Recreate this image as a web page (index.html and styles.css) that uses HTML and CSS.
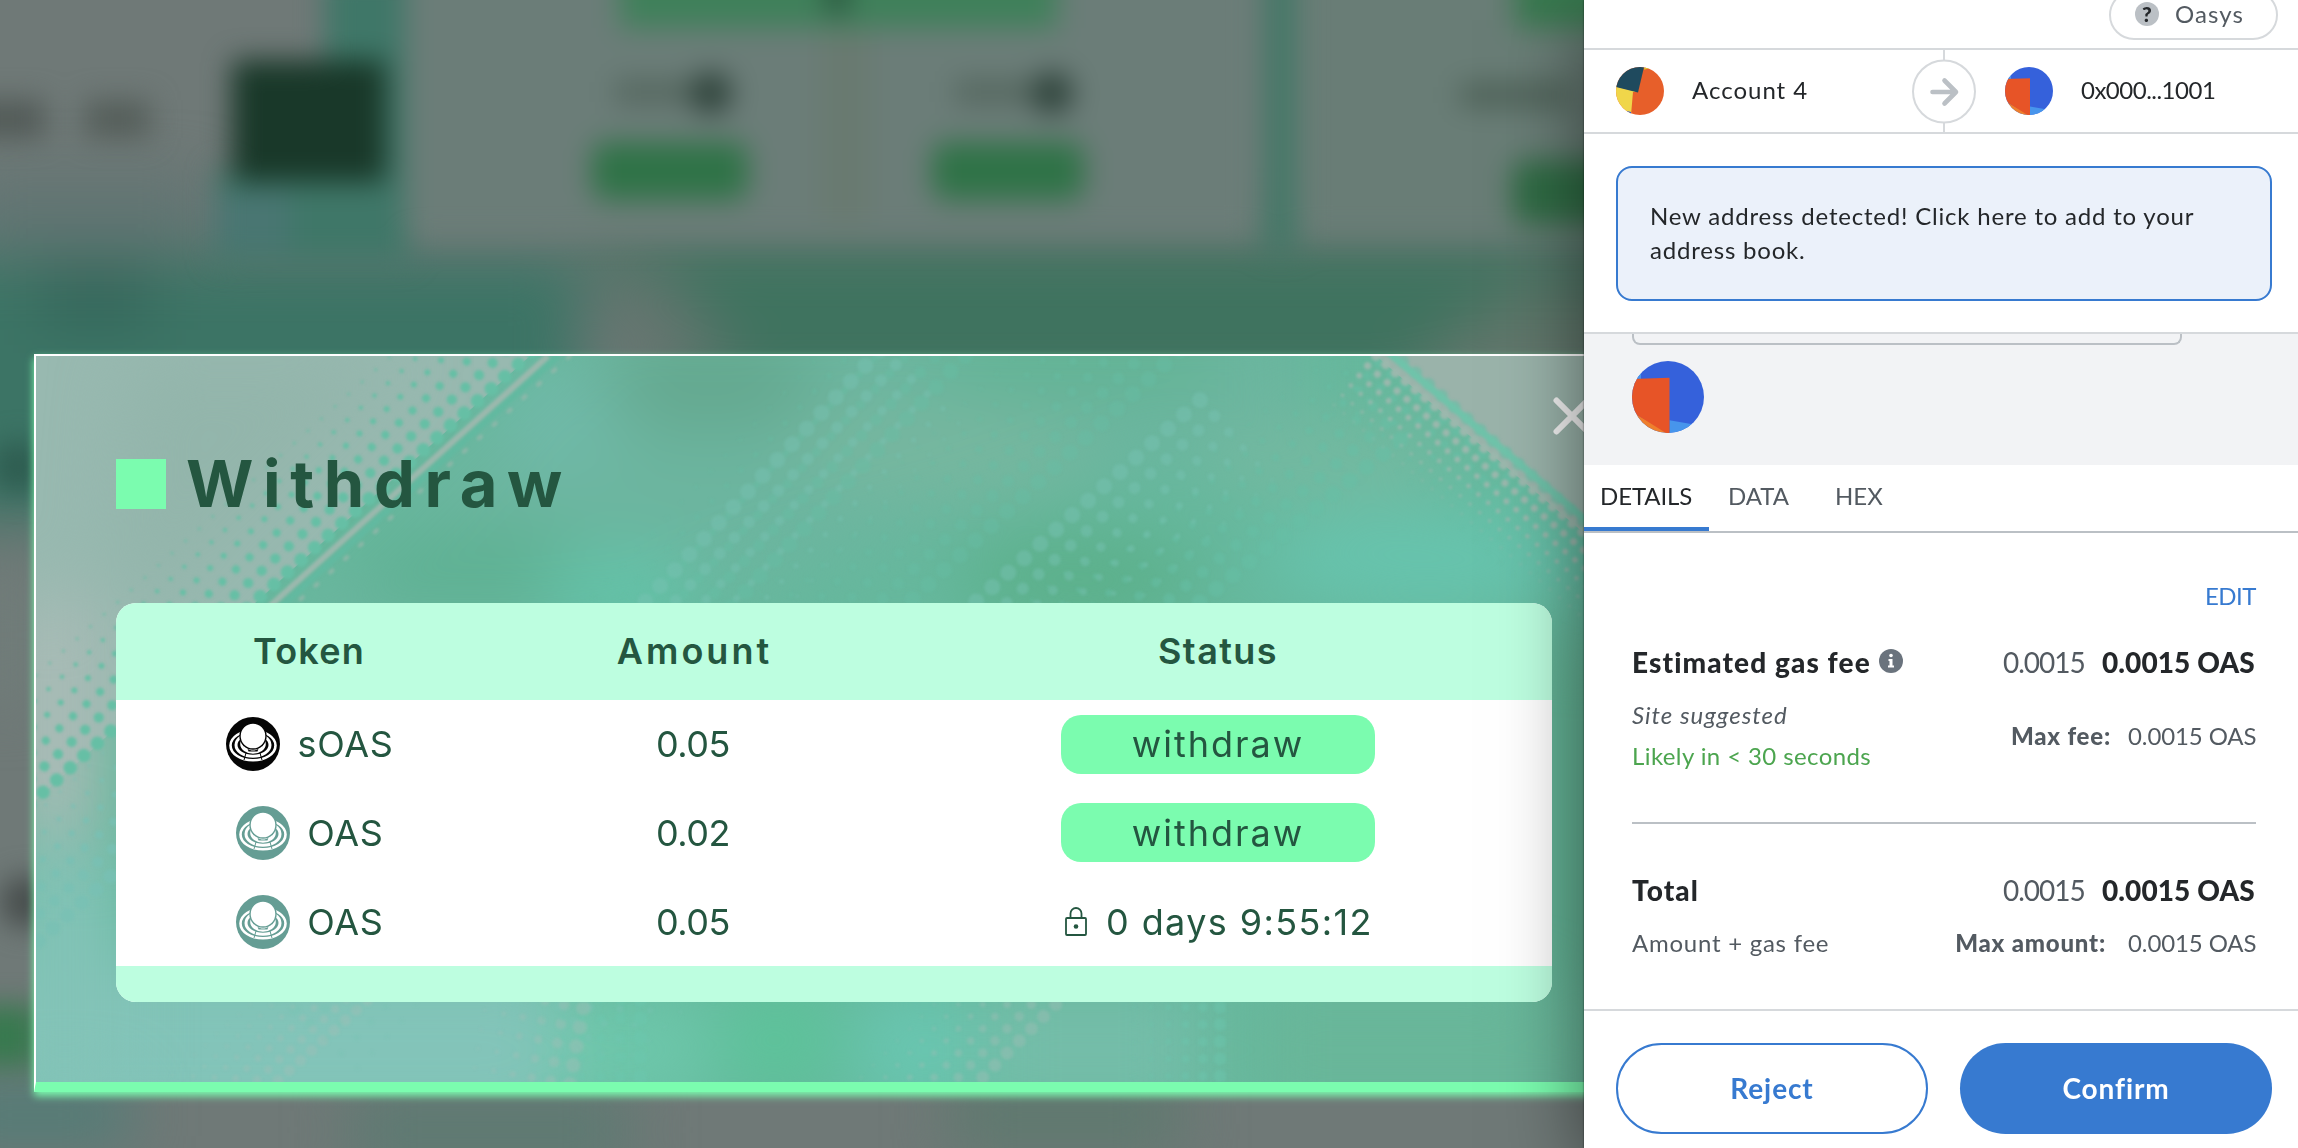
FILE: index.html
```
<!DOCTYPE html>
<html lang="en">
<head>
<meta charset="utf-8">
<title>Withdraw</title>
<link rel="stylesheet" href="styles.css">
</head>
<body>
<main class="app">
  <svg class="backdrop" viewBox="0 0 1584 1148" aria-hidden="true">
    <defs>
      <filter id="soft" x="-20%" y="-20%" width="140%" height="140%" color-interpolation-filters="sRGB"><feGaussianBlur stdDeviation="14"/></filter>
      <filter id="wide" x="-50%" y="-50%" width="200%" height="200%" color-interpolation-filters="sRGB"><feGaussianBlur stdDeviation="30"/></filter>
    </defs>
    <rect width="1584" height="1148" fill="#6f7977"/>
    <g filter="url(#wide)">
      <rect x="-80" y="255" width="660" height="265" fill="#3c7465"/>
      <rect x="40" y="265" width="110" height="60" fill="#34665a"/>
      <path d="M580 240h1090v60l-260 100H680z" fill="#3f735f"/>
      <path d="M580 270h80l90 100H620z" fill="#64756f"/>
      <path d="M1520 280l130 0v100h-260z" fill="#5f766a"/>
      <rect x="-40" y="180" width="250" height="60" fill="#5f7472"/>
      <rect x="-60" y="570" width="110" height="130" fill="#707c79"/>
      <rect x="-60" y="1090" width="190" height="50" fill="#4b7d76"/>
      <rect x="350" y="1090" width="280" height="80" fill="#5d7a72"/>
      <rect x="950" y="1080" width="230" height="70" fill="#5d796e"/>
    </g>
    <g filter="url(#soft)">
      <path d="M325-30h85v290H215V170h110z" fill="#3f7768"/>
      <rect x="215" y="190" width="75" height="60" fill="#497672"/>
      <rect x="405" y="-40" width="852" height="278" fill="#6b7d78"/>
      <rect x="820" y="30" width="50" height="190" fill="#697a70"/>
      <rect x="1300" y="-40" width="340" height="278" fill="#697d76"/>
      <rect x="1264" y="-40" width="32" height="290" fill="#437867"/>
      <rect x="620" y="-40" width="437" height="68" fill="#3f805a"/>
      <rect x="827" y="-30" width="20" height="44" fill="#28523c"/>
      <rect x="232" y="60" width="154" height="122" rx="6" fill="#193829"/>
      <rect x="592" y="142" width="156" height="58" rx="14" fill="#2f7347"/>
      <rect x="932" y="142" width="152" height="58" rx="14" fill="#2f7347"/>
      <rect x="1515" y="-40" width="120" height="68" fill="#38794f"/>
      <rect x="1512" y="160" width="120" height="64" rx="14" fill="#2f6b44"/>
      <rect x="615" y="80" width="75" height="24" fill="#55675f"/>
      <rect x="955" y="80" width="75" height="24" fill="#55675f"/>
      <circle cx="711" cy="93" r="21" fill="#2e423a"/>
      <circle cx="1052" cy="93" r="21" fill="#2e423a"/>
      <rect x="1460" y="84" width="110" height="22" fill="#4d6056"/>
      <rect x="-30" y="100" width="75" height="38" fill="#525a57"/>
      <rect x="85" y="100" width="65" height="38" fill="#555e5a"/>
      <circle cx="18" cy="467" r="26" fill="#2e5c50"/>
      <circle cx="26" cy="902" r="26" fill="#474d4c"/>
      <rect x="-30" y="1005" width="70" height="62" fill="#38794f"/>
    </g>
  </svg>

  <section class="modal">
    <svg class="artwork" viewBox="36 356 1548 726" preserveAspectRatio="xMinYMin slice" aria-hidden="true">
      <defs>
        <filter id="haze" x="-50%" y="-50%" width="200%" height="200%" color-interpolation-filters="sRGB"><feGaussianBlur stdDeviation="34"/></filter>
        <filter id="dots" x="0" y="0" width="100%" height="100%" color-interpolation-filters="sRGB"><feGaussianBlur stdDeviation="1.800"/></filter>
        <g id="halftone" fill="none" stroke-linecap="round" stroke-dasharray="0 21.5">
          <path d="M0 0H900" stroke-width="16"/>
          <path d="M0 21.5H900" stroke-width="12"/>
          <path d="M0 43H900" stroke-width="9.500"/>
          <path d="M0 64.500H900" stroke-width="7"/>
          <path d="M0 86H900" stroke-width="5"/>
          <path d="M0 107.500H900" stroke-width="3"/>
        </g>
      </defs>
      <rect x="36" y="356" width="1548" height="726" fill="#66b89d"/>
      <g filter="url(#haze)">
        <path d="M600 300h700v120L560 640H260z" fill="#6cb59f"/>
        <ellipse cx="710" cy="380" rx="110" ry="50" fill="#64a88f"/>
        <ellipse cx="560" cy="420" rx="60" ry="60" fill="#70b9a8"/>
        <ellipse cx="480" cy="570" rx="130" ry="40" fill="#5db192"/>
        <ellipse cx="620" cy="590" rx="80" ry="40" fill="#63c3a9"/>
        <ellipse cx="940" cy="450" rx="150" ry="40" fill="#78b79f"/>
        <ellipse cx="1080" cy="360" rx="150" ry="36" fill="#62b394"/>
        <ellipse cx="1080" cy="580" rx="120" ry="50" fill="#5cb08b"/>
        <ellipse cx="1330" cy="460" rx="130" ry="36" fill="#76b9a1"/>
        <ellipse cx="1430" cy="560" rx="170" ry="50" fill="#67c4ae"/>
        <rect x="1540" y="640" width="90" height="360" fill="#62b092"/>
        <rect x="0" y="960" width="560" height="180" fill="#83c4b9"/>
        <rect x="560" y="990" width="150" height="120" fill="#6dc6aa"/>
        <ellipse cx="780" cy="1040" rx="60" ry="60" fill="#5dc39a"/>
        <rect x="860" y="990" width="110" height="120" fill="#69c6b1"/>
        <rect x="980" y="990" width="220" height="120" fill="#75bda9"/>
        <rect x="1250" y="990" width="380" height="120" fill="#69b699"/>
      </g>
      <path d="M36 356H530L36 800z" fill="#98b9b0"/>
      <g filter="url(#haze)">
        <path d="M130 356h280L160 603H110z" fill="#93b5ab"/>
        <rect x="10" y="600" width="90" height="240" fill="#a9bbb6"/>
        <path d="M10 850h110v240H10z" fill="#83c3b7"/>
      </g>
      <path d="M1376 356h208v177z" fill="#9ab3aa"/>

      <g filter="url(#dots)">
        <g stroke="#66bfa5">
          <use href="#halftone" transform="translate(532 352) rotate(138) scale(.85)"/>
          <use href="#halftone" transform="translate(980 340) rotate(133)" opacity=".35"/>
          <use href="#halftone" transform="translate(1180 350) rotate(137)" opacity=".4"/>
          <use href="#halftone" transform="translate(1400 440) rotate(141)" opacity=".5"/>
          <use href="#halftone" transform="translate(1390 350) rotate(-138.500) scale(-.8)" opacity=".6"/>
        </g>
        <g stroke="#79c4b3" opacity=".45">
          <use href="#halftone" transform="translate(880 350) rotate(-47) scale(-1 1)"/>
          <use href="#halftone" transform="translate(1200 400) rotate(-42) scale(-1 1)"/>
        </g>
        <g stroke="#9bb8ad" fill="none">
          <path d="M548 356L270 606" stroke-width="6"/>
          <path d="M570 356L293 606" stroke-width="4" stroke-dasharray="3 17" stroke-linecap="round" opacity=".7"/>
          <use href="#halftone" transform="translate(1376 356) rotate(40.500) scale(.6)"/>
        </g>
        <path d="M1388 352l200 170" stroke="#6fc3aa" stroke-width="7"/>
        <path d="M558 356L282 606" stroke="#62b9a0" stroke-width="6"/>
        <g stroke="#78c1b4" opacity=".75">
          <use href="#halftone" transform="translate(240 760) rotate(138) scale(.9)"/>
        </g>
        <g stroke="#a3bfb6" opacity=".4">
          <use href="#halftone" transform="translate(590 970) rotate(100) scale(.9)"/>
          <use href="#halftone" transform="translate(390 980) rotate(138) scale(.7)"/>
          <use href="#halftone" transform="translate(1080 980) rotate(135) scale(.8)"/>
        </g>
        <g stroke="#6bc7ae" opacity=".45">
          <use href="#halftone" transform="translate(640 980) rotate(90) scale(.9)"/>
          <use href="#halftone" transform="translate(1220 990) rotate(90) scale(.8)"/>
        </g>
      </g>
    </svg>

    <header class="modal-head">
      <span class="marker"></span>
      <h1 class="modal-title">Withdraw</h1>
    </header>

    <div class="table">
      <div class="row head">
        <span class="th-token">Token</span><span class="th-amount">Amount</span><span class="th-status">Status</span>
      </div>
      <div class="row">
        <span class="token">
          <svg class="coin ink" viewBox="0 0 54 54"><use href="#coin"/></svg><span>sOAS</span>
        </span>
        <span class="amount">0.05</span>
        <span><button class="withdraw">withdraw</button></span>
      </div>
      <div class="row">
        <span class="token">
          <svg class="coin teal" viewBox="0 0 54 54"><use href="#coin"/></svg><span>OAS</span>
        </span>
        <span class="amount">0.02</span>
        <span><button class="withdraw">withdraw</button></span>
      </div>
      <div class="row">
        <span class="token">
          <svg class="coin teal" viewBox="0 0 54 54"><use href="#coin"/></svg><span>OAS</span>
        </span>
        <span class="amount">0.05</span>
        <span class="timer">
          <svg class="lock" viewBox="0 0 22 29" fill="none" stroke="#245640" stroke-width="1.800"><rect x="1" y="11" width="20" height="17" rx="1"/><path d="M5.500 11V6.500a5.500 5.500 0 0 1 11 0V11"/><circle cx="11" cy="19.500" r="2.300" fill="#245640" stroke="none"/></svg>
          <span>0 days 9:55:12</span>
        </span>
      </div>
      <div class="foot"></div>
    </div>

    <svg class="close" viewBox="0 0 38 38" stroke="#f4f4f4" stroke-width="6" stroke-linecap="round"><path d="M3.500 3.500l31 31M34.500 3.500l-31 31"/></svg>
  </section>
</main>

<aside class="panel">
  <div class="topbar">
    <div class="network">
      <span class="help">?</span>
      <span>Oasys</span>
    </div>
  </div>

  <div class="parties">
    <div class="party from">
      <svg class="avatar" viewBox="0 0 48 48"><g clip-path="url(#disc)"><rect width="48" height="48" fill="#e75f2a"/><path d="M-4 18.500L22 25 17 25 14 60-4 60z" fill="#f0d64a"/><path d="M-4 19L22 25.500 28.500-2H-4z" fill="#1f4a5e"/><path d="M28.500 0h9L28 2.800z" fill="#e0c62e"/><path d="M11 44l4 1v3h-5z" fill="#2f5be0"/></g></svg>
      <span class="from-name">Account 4</span>
    </div>
    <div class="transfer">
      <svg viewBox="0 0 64 82" fill="none"><path d="M32 0v82" stroke="#d6d9dc" stroke-width="2"/><circle cx="32" cy="41.500" r="31" fill="#fff" stroke="#d6d9dc" stroke-width="2"/><path d="M20.500 42H43M32.500 30.500L44 42 32.500 53.500" stroke="#bbc0c5" stroke-width="4.600" stroke-linecap="round" stroke-linejoin="round"/></svg>
    </div>
    <div class="party">
      <svg class="avatar" viewBox="0 0 48 48"><use href="#contract"/></svg>
      <span class="to-name">0x000...1001</span>
    </div>
  </div>

  <div class="notice-wrap">
    <div class="notice">New address detected! Click here to add to your address book.</div>
  </div>

  <div class="origin">
    <div class="select-edge"></div>
    <svg class="avatar-lg" viewBox="0 0 48 48"><use href="#contract"/></svg>
  </div>

  <nav class="tabs">
    <span class="tab active">DETAILS</span><span class="tab data">DATA</span><span class="tab hex">HEX</span>
  </nav>

  <div class="fees">
    <div class="edit">EDIT</div>
    <div class="line main">
      <span class="label"><span class="gas">Estimated gas fee</span>
        <svg class="info" viewBox="0 0 24 24"><circle cx="12" cy="12" r="12" fill="#6a737d"/><circle cx="12" cy="6.500" r="1.800" fill="#fff"/><path d="M9.500 10h4v6.500h1.500v2h-6v-2h1.500V12h-1z" fill="#fff"/></svg>
      </span>
      <span class="values"><span class="plain">0.0015</span><b class="total">0.0015 OAS</b></span>
    </div>
    <div class="line sub">
      <div class="notes"><i>Site suggested</i><span class="likely">Likely in &lt; 30 seconds</span></div>
      <span class="max"><b>Max fee:</b><span class="coinage">0.0015 OAS</span></span>
    </div>
    <hr class="rule">
    <div class="line main">
      <span class="label">Total</span>
      <span class="values"><span class="plain">0.0015</span><b class="total">0.0015 OAS</b></span>
    </div>
    <div class="line amount-line">
      <span class="amount-label">Amount + gas fee</span>
      <span class="max wide"><b>Max amount:</b><span class="coinage">0.0015 OAS</span></span>
    </div>
  </div>

  <footer class="actions">
    <button class="btn reject">Reject</button>
    <button class="btn confirm">Confirm</button>
  </footer>
</aside>

<svg class="sprites" aria-hidden="true">
  <defs>
    <clipPath id="disc"><circle cx="24" cy="24" r="24"/></clipPath>
    <symbol id="contract" viewBox="0 0 48 48">
      <g clip-path="url(#disc)">
        <rect width="48" height="48" fill="#3561db"/>
        <path d="M0 0h6v12H0z" fill="#4795ec"/>
        <path d="M25 39.500l23 4V48H25z" fill="#4795ec"/>
        <path d="M0 34l25 14H0z" fill="#ee7f2d"/>
        <path d="M-2 12l27-.8V49.500L-2 32.500z" fill="#e75427"/>
      </g>
    </symbol>
    <symbol id="coin" viewBox="0 0 54 54">
      <circle cx="27" cy="27" r="27" fill="currentColor"/>
      <g fill="none" stroke="#fff">
        <ellipse cx="27" cy="28.500" rx="22.500" ry="14.800" stroke-width="2.600"/>
        <ellipse cx="27" cy="28" rx="17" ry="11.300" stroke-width="3"/>
        <ellipse cx="27" cy="27" rx="11.500" ry="8.500" stroke-width="2.600"/>
      </g>
      <path d="M17 29c1.500 5 5 6.500 10 6.500S35.500 34 37 29l-4-2H21z" fill="#fff"/>
      <path d="M21.500 31.500c3 2.800 8 2.800 11 0l-1 3h-9z" fill="currentColor"/>
      <path d="M20 36l-2 7M34 36l2 7" stroke="currentColor"/>
      <circle cx="27" cy="19" r="13" fill="#fff" stroke="currentColor" stroke-width="1.400"/>
    </symbol>
  </defs>
</svg>
</body>
</html>
```

FILE: styles.css
```
* { box-sizing: border-box; }
body {
  margin: 0;
  width: 2298px;
  height: 1148px;
  display: flex;
  overflow: hidden;
  background: #fff;
  font-family: Lato, "Liberation Sans", sans-serif;
}
button { font: inherit; color: inherit; letter-spacing: inherit; border: 0; padding: 0; margin: 0; }
.sprites { position: absolute; width: 0; height: 0; }

/* dimmed application and modal window */
.app {
  position: relative;
  width: 1584px;
  height: 1148px;
  overflow: hidden;
  flex: none;
}
.backdrop { position: absolute; inset: 0; width: 1584px; height: 1148px; }
.modal {
  position: absolute;
  left: 34px;
  top: 354px;
  width: 1600px;
  height: 738px;
  padding: 103px 0 0 80px;
  border: 2px solid #fff;
  border-bottom: 10px solid #7bfcaf;
  box-shadow: 0 4px 8px #7bfcaf;
  font-family: Inter, "Liberation Sans", sans-serif;
  color: #245640;
}
.artwork { position: absolute; left: 0; top: 0; width: 1548px; height: 726px; }
.modal-head { position: relative; display: flex; align-items: center; gap: 20px; height: 50px; }
.marker { width: 50px; height: 50px; background: #7bfcaf; }
.modal-title { margin: 0; font-size: 65px; line-height: 64px; font-weight: 700; letter-spacing: 9.6px; }

.table {
  position: relative;
  width: 1436px;
  margin-top: 94px;
  border-radius: 20px;
  overflow: hidden;
  background: #fff;
  font-size: 36px;
  line-height: 44px;
}
.row { display: grid; grid-template-columns: 386px 382px 668px; height: 88.67px; align-items: center; text-align: center; }
.head { height: 97px; padding-bottom: 2px; background: #bdfee0; font-weight: 600; }
.th-token { letter-spacing: 1.2px; }
.th-amount { padding-left: 3px; letter-spacing: 3px; }
.th-status { letter-spacing: 1.4px; }
.token { display: flex; align-items: center; justify-content: center; gap: 17px; padding-left: 2px; letter-spacing: .7px; }
.coin { width: 54px; height: 54px; }
.ink { color: #050505; }
.teal { color: #659d94; }
.amount { letter-spacing: -.5px; }
.withdraw { width: 314px; height: 59px; border-radius: 20px; background: #7bfcaf; color: #245640; letter-spacing: 2px; vertical-align: middle; }
.timer { display: flex; align-items: center; justify-content: center; gap: 19px; padding-left: 2px; letter-spacing: 1.4px; }
.lock { width: 22px; height: 29px; }
.foot { height: 36px; background: #bdfee0; }
.close { position: absolute; left: 1517px; top: 41px; width: 38px; height: 38px; }

/* wallet confirmation window */
.panel {
  position: relative;
  width: 714px;
  height: 1148px;
  background: #fff;
  color: #24272a;
  font-size: 24px;
  line-height: 34px;
  box-shadow: 0 0 2px rgba(0,0,0,.6), 0 20px 75px rgba(0,0,0,.5);
}
.topbar { display: flex; justify-content: flex-end; align-items: flex-end; height: 50px; padding: 0 20px 8px 0; border-bottom: 2px solid #d6d9dc; }
.network { display: flex; align-items: center; flex: none; gap: 16px; width: 169px; height: 50px; padding: 0 0 2px 24px; border: 2px solid #d6d9dc; border-radius: 25px; color: #535a61; letter-spacing: 1.1px; }
.help { display: flex; align-items: center; justify-content: center; width: 24px; height: 24px; border-radius: 50%; background: #bbc0c5; color: #24272a; font-size: 21px; font-weight: 900; line-height: 24px; letter-spacing: 0; }
.parties { display: flex; height: 84px; border-bottom: 2px solid #d6d9dc; }
.party { display: flex; align-items: center; gap: 28px; }
.party span { margin-top: -3px; }
.from { width: 328px; padding-left: 32px; }
.from-name { letter-spacing: 1px; }
.to-name { letter-spacing: -.5px; }
.avatar { width: 48px; height: 48px; }
.transfer { width: 64px; margin-right: 29px; }
.transfer svg { display: block; width: 64px; height: 82px; }
.notice-wrap { height: 200px; padding: 32px 26px 0 32px; border-bottom: 2px solid #d6d9dc; }
.notice { height: 135px; padding: 31px 30px 0 32px; border: 2px solid #377ad0; border-radius: 16px; background: #ebf1fa; letter-spacing: .8px; }
.origin { height: 131px; padding-left: 48px; background: #f2f3f5; }
.select-edge { width: 550px; height: 11px; border: 2px solid #bbc0c5; border-top: 0; border-radius: 0 0 8px 8px; }
.avatar-lg { display: block; width: 72px; height: 72px; margin-top: 16px; }
.tabs { display: flex; height: 68px; border-bottom: 2px solid #bbc0c5; color: #535a61; line-height: 61px; }
.tab.active { width: 125px; padding-left: 16px; border-bottom: 4px solid #377ad0; color: #24272a; letter-spacing: -.1px; }
.data { padding-left: 19px; width: 126px; letter-spacing: 0; }
.tab.hex { letter-spacing: 0; }

.fees { height: 476px; padding: 46px 42px 0 48px; color: #535a61; }
.edit { text-align: right; color: #377ad0; letter-spacing: -.5px; }
.line { display: flex; justify-content: space-between; align-items: center; }
.main { height: 40px; font-size: 28px; line-height: 40px; }
.edit + .main { margin-top: 29px; }
.label { display: flex; align-items: center; gap: 8px; font-weight: 900; color: #24272a; letter-spacing: 1.1px; }
.info { width: 24px; height: 24px; margin-top: -3px; }
.values { display: flex; }
.plain { width: 99px; letter-spacing: -1px; }
.total { width: 154px; font-weight: 900; color: #24272a; white-space: nowrap; letter-spacing: .1px; }
.sub { margin-top: 12px; height: 82px; }
.notes { display: flex; flex-direction: column; line-height: 41px; letter-spacing: 1px; }
.likely { color: #4ca54f; letter-spacing: .4px; }
.max { display: flex; gap: 17px; padding-top: 1px; letter-spacing: .7px; }
.max.wide { gap: 22px; padding-top: 0; }
.max b { font-weight: 900; letter-spacing: .8px; }
.coinage { width: 128px; letter-spacing: -.1px; white-space: nowrap; }
.rule { height: 2px; margin: 46px 0; border: 0; background: #bbc0c5; }
.amount-line { margin-top: 16px; }
.amount-label { letter-spacing: .75px; }
.actions { display: flex; gap: 32px; height: 139px; padding: 32px 26px 0 32px; border-top: 2px solid #d6d9dc; }
.btn { flex: none; width: 312px; height: 91px; border-radius: 46px; font-size: 28px; font-weight: 700; letter-spacing: .9px; padding-bottom: 2px; }
.reject { border: 2px solid #377ad0; background: #fff; color: #377ad0; }
.confirm { background: #377ad0; color: #fff; }
```
